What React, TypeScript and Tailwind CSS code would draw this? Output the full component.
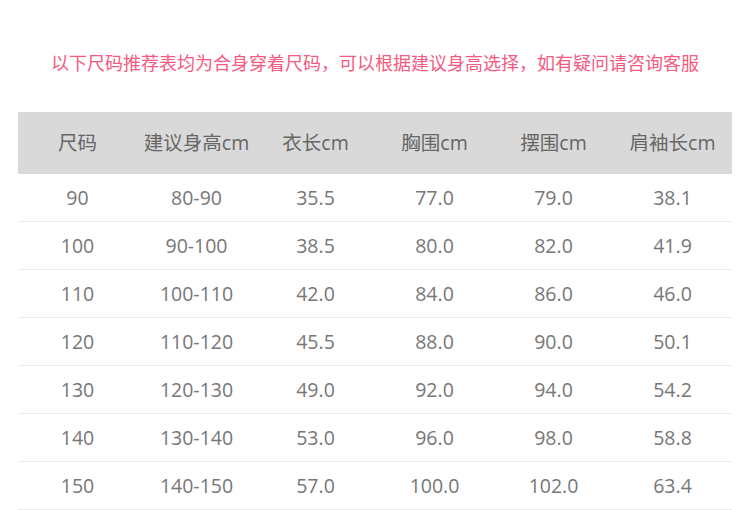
import React from "react";

const headers = ["尺码", "建议身高cm", "衣长cm", "胸围cm", "摆围cm", "肩袖长cm"];
const rows = [
  ["90", "80-90", "35.5", "77.0", "79.0", "38.1"],
  ["100", "90-100", "38.5", "80.0", "82.0", "41.9"],
  ["110", "100-110", "42.0", "84.0", "86.0", "46.0"],
  ["120", "110-120", "45.5", "88.0", "90.0", "50.1"],
  ["130", "120-130", "49.0", "92.0", "94.0", "54.2"],
  ["140", "130-140", "53.0", "96.0", "98.0", "58.8"],
  ["150", "140-150", "57.0", "100.0", "102.0", "63.4"],
];

export default function App() {
  return (
    <div
      className="w-[750px] h-[510px] bg-white overflow-hidden"
      style={{ fontFamily: '"Open Sans", "Noto Sans CJK SC", sans-serif' }}
    >
      <div
        className="pt-[50px] h-[74px] text-center text-[18px] leading-[24px] text-[#f55a80]"
        style={{ fontFamily: '"Noto Sans CJK SC", sans-serif' }}
      >
        以下尺码推荐表均为合身穿着尺码，可以根据建议身高选择，如有疑问请咨询客服
      </div>
      <div className="mx-[18px] mt-[38px]">
        <div className="grid grid-cols-6 h-[62px] bg-[#d9d9d9] items-center text-center text-[19.5px] text-[#666]">
          {headers.map((h) => (
            <div key={h}>{h}</div>
          ))}
        </div>
        {rows.map((r, i) => (
          <div
            key={i}
            className="grid grid-cols-6 h-[48px] border-b border-[#ececec] items-center text-center text-[19.5px] text-[#777]"
          >
            {r.map((c, j) => (
              <div key={j}>{c}</div>
            ))}
          </div>
        ))}
      </div>
    </div>
  );
}
